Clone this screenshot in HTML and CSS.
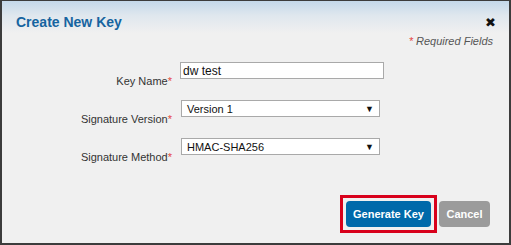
FILE: index.html
```html
<!DOCTYPE html>
<html>
<head>
    <link rel="stylesheet" href="styles.css">
</head>
<body>
    <div class="dialog">
        <div class="header">
            <h1>Create New Key</h1>
            <span class="close">&#10006;</span>
        </div>
        <div class="required"><span class="star">*</span> Required Fields</div>
        <div class="form">
            <label class="label">Key Name<span class="star">*</span></label>
            <div class="field"><input class="text-input" type="text" value="dw test"></div>

            <label class="label">Signature Version<span class="star">*</span></label>
            <div class="field"><div class="select">Version 1<span class="arrow">&#9660;</span></div></div>

            <label class="label">Signature Method<span class="star">*</span></label>
            <div class="field"><div class="select">HMAC-SHA256<span class="arrow">&#9660;</span></div></div>
        </div>
        <div class="actions">
            <span class="highlight"><button class="btn btn-primary">Generate Key</button></span>
            <button class="btn btn-cancel">Cancel</button>
        </div>
    </div>
</body>
</html>
```

FILE: styles.css
```css
* {
    margin: 0;
    padding: 0;
    box-sizing: border-box;
}

body {
    font-family: 'Liberation Sans', Arial, sans-serif;
    background: #f0f0f0;
}

.dialog {
    width: 511px;
    height: 245px;
    border: 2px solid #3c3c3c;
    border-top-width: 1px;
    background: #f0f0f0;
    display: flex;
    flex-direction: column;
}

.header {
    display: flex;
    justify-content: space-between;
    align-items: center;
    padding: 10px 13px 0 14px;
    height: 32px;
    background: linear-gradient(to bottom, #c4d8ea 0%, #dfe7ee 45%, #f0f0f0 100%);
}

h1 {
    font-size: 14px;
    font-weight: 700;
    color: #1664a0;
}

.close {
    font-size: 13px;
    color: #111;
    font-family: 'DejaVu Sans', sans-serif;
}

.required {
    text-align: right;
    padding-right: 16px;
    margin-top: 2px;
    font-size: 11px;
    font-style: italic;
    color: #555;
}

.star {
    color: #e5473f;
}

.form {
    display: grid;
    grid-template-columns: 170px 1fr;
    column-gap: 8px;
    row-gap: 21px;
    margin-top: 15px;
    font-size: 11px;
    color: #333;
}

.label {
    text-align: right;
    align-self: end;
    margin-bottom: -8px;
}

.field {
    display: flex;
}

.text-input {
    width: 204px;
    height: 17px;
    border: 1px solid #a9a9a9;
    background: #fff;
    font-family: inherit;
    font-size: 12px;
    color: #111;
    padding: 0 2px;
}

.select {
    width: 199px;
    height: 17px;
    margin-left: 1px;
    border: 1px solid #a9a9a9;
    background: #fff;
    font-size: 11px;
    color: #111;
    padding: 0 5px 0 5px;
    display: flex;
    justify-content: space-between;
    align-items: center;
}

.arrow {
    font-size: 9px;
}

.actions {
    margin-top: auto;
    display: flex;
    justify-content: flex-end;
    align-items: center;
    gap: 2px;
    padding: 0 19px 10px 0;
}

.highlight {
    border: 3px solid #d8001b;
    padding: 3px;
    display: flex;
}

.btn {
    border: none;
    border-radius: 4px;
    height: 26px;
    font-family: inherit;
    font-size: 11px;
    font-weight: 700;
    color: #fff;
}

.btn-primary {
    background: #0069aa;
    width: 85px;
}

.btn-cancel {
    background: #9b9b9b;
    width: 51px;
}
```
